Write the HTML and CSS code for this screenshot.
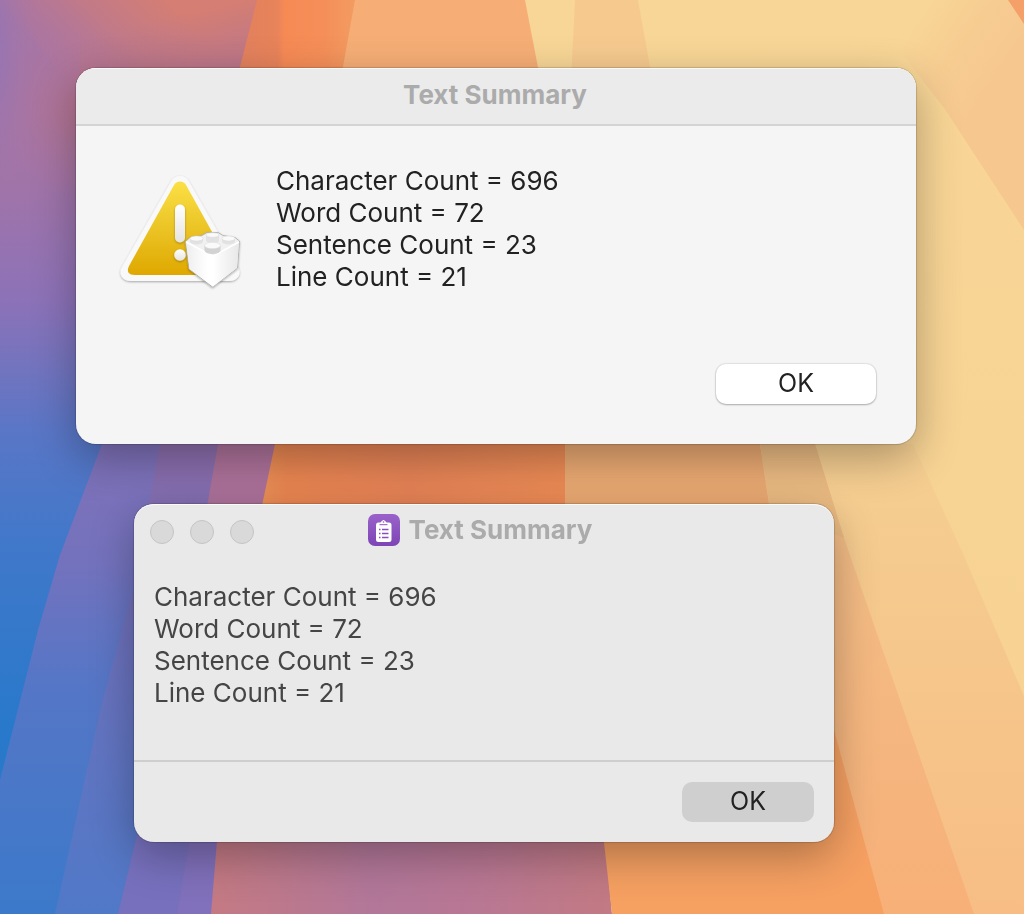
FILE: index.html
```html
<!DOCTYPE html>
<html lang="en">
<head>
<meta charset="utf-8">
<meta name="viewport" content="width=device-width, initial-scale=1">
<title>Text Summary</title>
<link rel="stylesheet" href="styles.css">
</head>
<body>
<svg class="wallpaper" viewBox="0 0 1024 914" preserveAspectRatio="none" aria-hidden="true">
  <defs>
    <linearGradient id="sky" x2="0" y2="1"><stop offset="0" stop-color="#a876a4"/><stop offset=".2" stop-color="#a174a8"/><stop offset=".33" stop-color="#8c72b8"/><stop offset=".41" stop-color="#7074bf"/><stop offset=".47" stop-color="#5a76c6"/><stop offset=".6" stop-color="#4078ca"/><stop offset=".8" stop-color="#2879cb"/><stop offset="1" stop-color="#2e78ca"/></linearGradient>
    <radialGradient id="edge" gradientUnits="userSpaceOnUse" cx="0" cy="0" r="1" gradientTransform="translate(-10 50) scale(50 160)"><stop offset="0" stop-color="#9074b8"/><stop offset="1" stop-color="#a876a4" stop-opacity="0"/></radialGradient>
    <linearGradient id="warm" gradientUnits="userSpaceOnUse" x1="30" y1="60" x2="130" y2="-40"><stop offset="0" stop-color="#b4759a" stop-opacity="0"/><stop offset=".55" stop-color="#c17a88"/><stop offset="1" stop-color="#d57e73"/></linearGradient>
    <linearGradient id="dusk" gradientUnits="userSpaceOnUse" x1="150" y1="20" x2="165" y2="90"><stop offset="0" stop-color="#b8758c" stop-opacity="0"/><stop offset="1" stop-color="#b8758c"/></linearGradient>
    <radialGradient id="rose" gradientUnits="userSpaceOnUse" cx="90" cy="110" r="90"><stop offset="0" stop-color="#b8748c"/><stop offset="1" stop-color="#b0749a" stop-opacity="0"/></radialGradient>
    <linearGradient id="violet" x2="0" y2="1"><stop offset="0" stop-color="#7f71b8"/><stop offset=".25" stop-color="#7472bd"/><stop offset=".5" stop-color="#5676c6"/><stop offset="1" stop-color="#3c79ca"/></linearGradient>
    <linearGradient id="violet2" x2="0" y2="1"><stop offset="0" stop-color="#8d6dac"/><stop offset=".4" stop-color="#6d71bc"/><stop offset="1" stop-color="#5079c8"/></linearGradient>
    <linearGradient id="mauve"><stop offset="0" stop-color="#c47a83"/><stop offset=".4" stop-color="#b27799"/><stop offset=".65" stop-color="#b87794"/><stop offset="1" stop-color="#c27a83"/></linearGradient>
    <linearGradient id="ember"><stop offset="0" stop-color="#e0805f"/><stop offset=".35" stop-color="#e8835a"/><stop offset=".4" stop-color="#f68a55"/><stop offset=".7" stop-color="#f58f59"/><stop offset="1" stop-color="#f2a164"/></linearGradient>
    <linearGradient id="orange"><stop offset="0" stop-color="#eb9257"/><stop offset=".1" stop-color="#e98551"/><stop offset=".5" stop-color="#e58256"/><stop offset="1" stop-color="#ec8b55"/></linearGradient>
    <linearGradient id="sand" x2="0" y2="1"><stop offset="0" stop-color="#f8d697"/><stop offset="1" stop-color="#f7d191"/></linearGradient>
    <linearGradient id="glow" gradientUnits="userSpaceOnUse" x1="905" y1="40" x2="995" y2="100"><stop offset="0" stop-color="#f6c990" stop-opacity="0"/><stop offset=".4" stop-color="#f6c990" stop-opacity=".7"/><stop offset="1" stop-color="#f6c78f"/></linearGradient>
    <linearGradient id="peach" x2="0" y2="1"><stop offset="0" stop-color="#f5cf92"/><stop offset="1" stop-color="#f7bd84"/></linearGradient>
    <linearGradient id="peach2" x2="0" y2="1"><stop offset="0" stop-color="#f2c08a"/><stop offset="1" stop-color="#f7b078"/></linearGradient>
  </defs>
  <path fill="url(#sky)" d="M0 0h300v914H0z"/>
  <path fill="url(#rose)" d="M0 0h300v260H0z"/>
  <path fill="url(#warm)" d="M0 0h300v120H100z"/>
  <path fill="url(#dusk)" d="M80 0h220v120H80z"/>
  <path fill="url(#edge)" d="M0 0h60v240H0z"/>
  <path fill="url(#violet)" d="M102 444h200v470H-40L0 780l38-150 22-75z"/>
  <path fill="url(#violet2)" d="M160 444h140v470H55l47-212 32-115z"/>
  <path fill="#7770bd" d="M155 760h70v154H118z"/>
  <path fill="#8170bb" d="M200 780h50v134h-73z"/>
  <path fill="#ac7199" d="M218 444h82v80h-96z"/>
  <path fill="url(#mauve)" d="M222 780h378l12 134H211z"/>
  <path fill="url(#orange)" d="M275 444h290v90H256z"/>
  <path fill="#eaa972" d="M565 444h260v300H565z"/>
  <path fill="url(#ember)" d="M257 0h110l-27 110H229z"/>
  <path fill="#f6ae76" d="M355 0h200v100H337z"/>
  <path fill="url(#sand)" d="M525 0h499v914H865L760 444V140H552z"/>
  <path fill="#f6ca8f" d="M575 0h63l18 100h-86z"/>
  <path fill="url(#glow)" d="M860 0h164v230l-80-122z"/>
  <path fill="#f5a069" d="M1008 0h16v24z"/>
  <path fill="url(#peach)" d="M760 444h153l51 112 60 140v218H850z"/>
  <path fill="url(#peach2)" d="M760 444h55l29 94 38 110 92 266H830z"/>
  <path fill="#eaba82" d="M760 444h55l29 94-74-30z"/>
  <path fill="#f6a062" d="M597 780l237-50 50 184H612z"/>
</svg>
<main class="desktop">
  <section class="window alert" role="alertdialog" aria-labelledby="alert-title">
    <header class="alert-bar"><h1 class="title" id="alert-title">Text Summary</h1></header>
    <div class="alert-body">
      <svg class="warning" viewBox="0 0 128 128" role="img" aria-label="Warning">
        <defs>
          <linearGradient id="gold" x2="0" y2="1"><stop offset="0" stop-color="#fbe045"/><stop offset=".5" stop-color="#ebc425"/><stop offset="1" stop-color="#dfa800"/></linearGradient>
          <linearGradient id="mark" x2="0" y2="1"><stop offset="0" stop-color="#fff"/><stop offset="1" stop-color="#e5e4e1"/></linearGradient>
          <linearGradient id="leftface"><stop offset="0" stop-color="#eee"/><stop offset=".8" stop-color="#fff"/></linearGradient>
          <linearGradient id="rightface"><stop offset="0" stop-color="#fff"/><stop offset="1" stop-color="#e8e8e8"/></linearGradient>
          <filter id="drop" x="-20%" y="-20%" width="140%" height="150%"><feDropShadow dx="0" dy="1" stdDeviation="1" flood-opacity=".32"/></filter>
        </defs>
        <path filter="url(#drop)" fill="#f9f9f9" d="M55 16.500Q58 11 64 11Q70 11 73 16.500L122 102Q125 108 122 112Q119 116 113 116H15Q9 116 6 112Q3 107 6 102Z"/>
        <path fill="url(#gold)" d="M58 20Q60 16.500 64 16.500Q68 16.500 70 20L115 101Q117 105 115.500 107.500Q114 110 109 110H19Q14 110 12.500 107.500Q11 105 13 101Z"/>
        <g filter="url(#drop)" fill="url(#mark)"><rect x="59" y="39.500" width="10" height="38" rx="5"/><circle cx="64" cy="90" r="5.800"/></g>
        <g filter="url(#drop)" stroke-linejoin="round">
          <path fill="#f1f1f1" stroke="#aaa" stroke-width=".8" d="M69.500 76.500L74 72.500L86 70.500L91 67.500H102L107 70.500L119 72.500L123.500 76L121.500 103L96.500 122L73 104Z"/>
          <path fill="url(#leftface)" d="M70 77L97 91V121.500L73.500 104Z"/>
          <path fill="url(#rightface)" d="M97 91L123 77L121 103L97 121.500Z"/>
          <path fill="none" stroke="#fff" stroke-width="1.500" d="M70 77L97 91L123 77M97 91V120"/>
        </g>
        <g fill="#e2e2e2">
          <path d="M74 74v2.500a6.500 3 0 0 0 13 0V74z"/><path d="M106 74v2.500a6.500 3 0 0 0 13 0V74z"/><path d="M90 69.500v6a6.500 2.500 0 0 0 13 0v-6z"/><path d="M88.500 81v4.500a8 3.500 0 0 0 16 0V81z" fill="#d2d2d2"/>
        </g>
        <g fill="#fafafa" stroke="#d6d6d6" stroke-width=".5"><ellipse cx="80.500" cy="73.500" rx="6.500" ry="2.600"/><ellipse cx="112.500" cy="73.500" rx="6.500" ry="2.600"/><ellipse cx="96.500" cy="70" rx="6.500" ry="2.300"/><ellipse cx="96.500" cy="80.500" rx="8" ry="3.300"/></g>
      </svg>
      <ul class="stats">
        <li>Character Count = 696</li>
        <li>Word Count = 72</li>
        <li>Sentence Count = 23</li>
        <li>Line Count = 21</li>
      </ul>
    </div>
    <footer class="alert-actions"><button class="button button-light" type="button">OK</button></footer>
  </section>
  <section class="window panel" role="dialog" aria-labelledby="panel-title">
    <header class="panel-bar">
      <div class="controls">
        <button class="control" type="button" aria-label="Close"></button>
        <button class="control" type="button" aria-label="Minimize"></button>
        <button class="control" type="button" aria-label="Zoom"></button>
      </div>
      <div class="panel-heading">
        <svg class="app-icon" viewBox="0 0 32 32" aria-hidden="true">
          <defs><linearGradient id="purple" x2="0" y2="1"><stop offset="0" stop-color="#9a62c9"/><stop offset="1" stop-color="#7d45b5"/></linearGradient></defs>
          <rect width="32" height="32" rx="7" fill="url(#purple)"/>
          <path fill="#fff" d="M10 8.500h2.500Q13 7 14.200 7Q14.400 6 15.500 6Q16.600 6 16.800 7Q18 7 18.500 8.500H21Q23.500 8.500 23.500 11V25.500Q23.500 28 21 28H10.500Q8 28 8 25.500V11Q8 8.500 10 8.500Z"/>
          <circle cx="15.500" cy="8" r=".8" fill="#9058c2"/>
          <path fill="none" stroke="#8d56bf" d="M11.500 10.700h8"/>
          <path fill="none" stroke="#8850bb" stroke-width="1.300" d="M11 15.500h1.500M14 15.500h6.500M11 19.500h1.500M14 19.500h6.500M11 23.500h1.500M14 23.500h6.500"/>
        </svg>
        <h2 class="title" id="panel-title">Text Summary</h2>
      </div>
    </header>
    <ul class="stats panel-stats">
      <li>Character Count = 696</li>
      <li>Word Count = 72</li>
      <li>Sentence Count = 23</li>
      <li>Line Count = 21</li>
    </ul>
    <footer class="panel-actions"><button class="button button-grey" type="button">OK</button></footer>
  </section>
</main>
</body>
</html>
```
FILE: styles.css
```css
* { box-sizing: border-box; }
body {
  margin: 0;
  min-height: 100vh;
  font-family: Inter, "Liberation Sans", sans-serif;
  font-size: 26px;
  line-height: 32px;
  color: #222;
}
.wallpaper {
  position: fixed;
  inset: 0;
  z-index: -1;
  width: 100%;
  height: 100%;
}
.desktop {
  display: flex;
  flex-direction: column;
  gap: 60px;
  padding: 68px 108px 72px 76px;
}
.window {
  overflow: hidden;
  border-radius: 20px;
  box-shadow: 0 0 1px 1px rgba(0, 0, 0, .16), 0 14px 44px rgba(0, 0, 0, .3), inset 0 1px 0 #fafafa;
}
.title {
  margin: 0;
  font-size: 26px;
  font-weight: 700;
  line-height: 32px;
  color: #ababab;
}
.alert { background: #f5f5f5; }
.alert-bar {
  display: flex;
  justify-content: center;
  padding: 11px 2px 13px 0;
  border-bottom: 2px solid #d4d4d4;
  background: #ebebeb;
  box-shadow: inset 0 1px 0 #fafafa;
}
.alert-body {
  display: flex;
  gap: 32px;
  padding: 39px 40px 0;
}
.warning {
  flex: none;
  width: 128px;
  height: 128px;
}
.stats {
  margin: 0;
  padding: 0;
  list-style: none;
}
.alert-actions {
  display: flex;
  justify-content: flex-end;
  padding: 71px 40px 40px;
}
.button {
  height: 40px;
  padding: 0 0 2px;
  border: 0;
  border-radius: 10px;
  font: inherit;
  font-size: 25px;
  color: #222;
}
.button-light {
  width: 160px;
  background: #fff;
  box-shadow: 0 0 1px 1px rgba(0, 0, 0, .08), 0 1px 2px rgba(0, 0, 0, .25);
}
.panel {
  margin: 0 82px 0 58px;
  background: #e9e9e9;
}
.panel-bar {
  display: grid;
  grid-template-columns: 1fr auto 1fr;
  align-items: center;
  padding: 10px 24px 12px 16px;
}
.controls {
  display: flex;
  gap: 16px;
  padding-top: 4px;
}
.control {
  width: 24px;
  height: 24px;
  padding: 0;
  border: 1px solid #c4c4c4;
  border-radius: 50%;
  background: #d9d9d9;
}
.panel-heading {
  display: flex;
  align-items: center;
  gap: 9px;
}
.app-icon {
  width: 32px;
  height: 32px;
}
.panel-stats {
  padding: 23px 20px 51px;
  color: #454545;
}
.panel-actions {
  display: flex;
  justify-content: flex-end;
  padding: 20px;
  border-top: 2px solid #cecece;
}
.button-grey {
  width: 132px;
  background: #cfcfcf;
}
```
